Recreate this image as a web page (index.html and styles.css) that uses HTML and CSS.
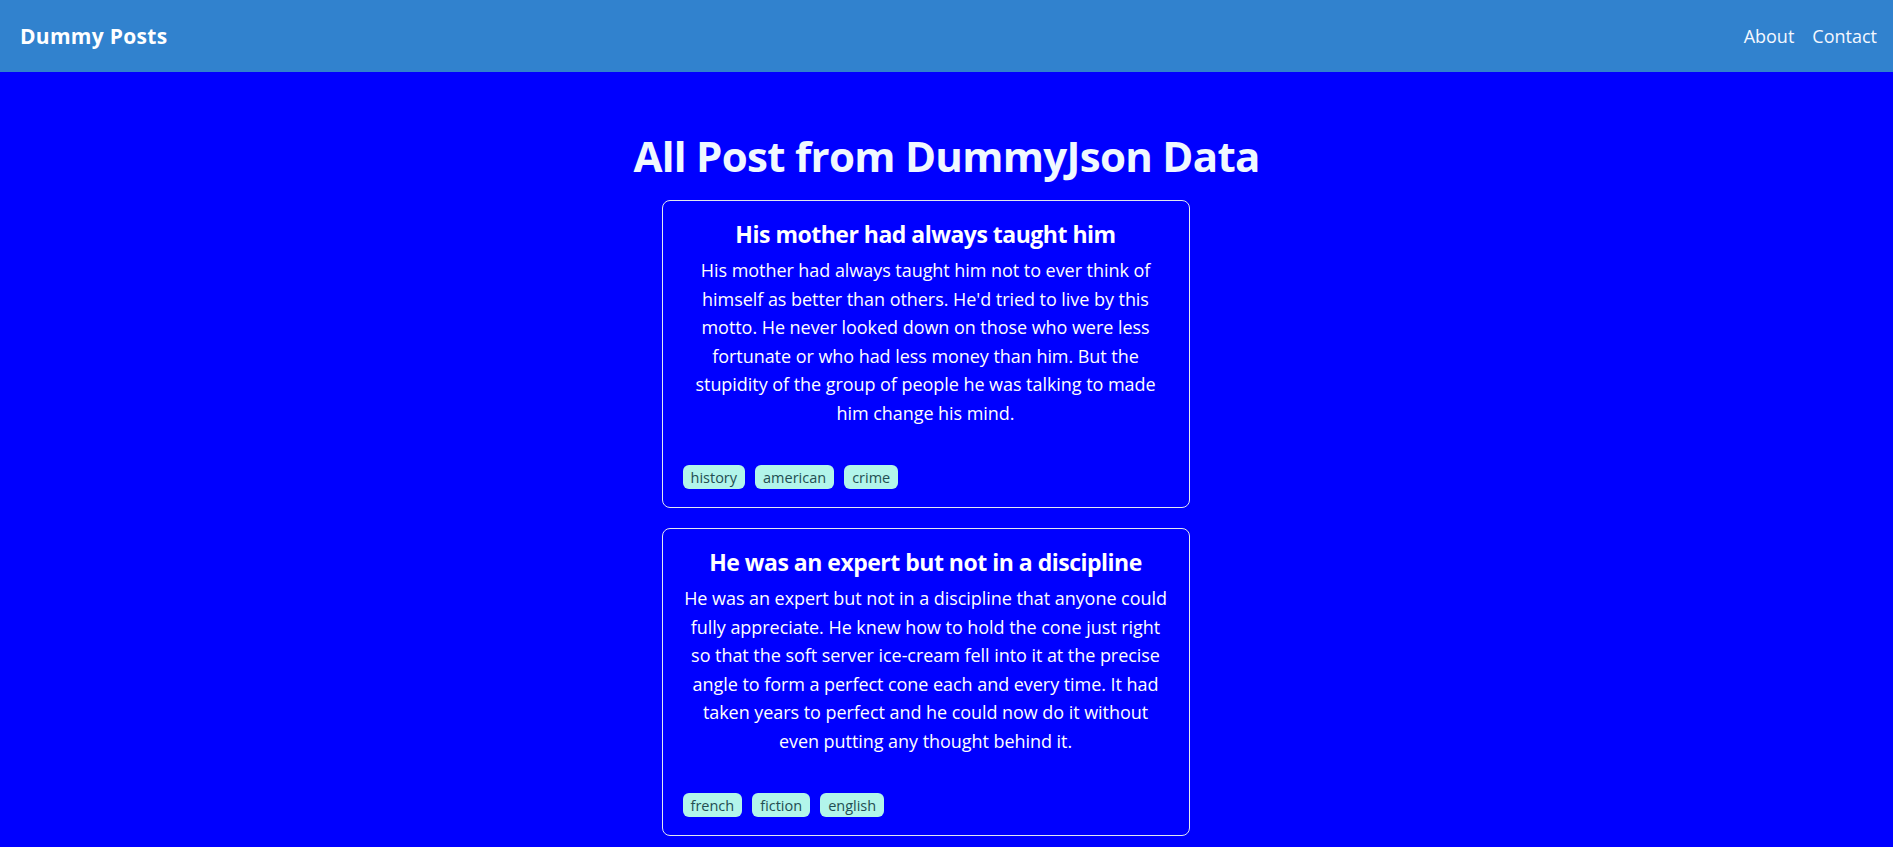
FILE: index.html
```html
<!DOCTYPE html>
<html lang="en">
<head>
<meta charset="utf-8">
<title>Dummy Posts</title>
<link rel="stylesheet" href="styles.css">
</head>
<body>
<header class="topbar">
  <div class="brand">Dummy Posts</div>
  <nav class="nav">
    <a class="nav-link" href="#">About</a>
    <a class="nav-link" href="#">Contact</a>
  </nav>
</header>
<main class="content">
  <h1 class="page-title">All Post from DummyJson Data</h1>
  <section class="post-list">
    <article class="post-card">
      <h2 class="post-title">His mother had always taught him</h2>
      <p class="post-body">His mother had always taught him not to ever think of himself as better than others. He'd tried to live by this motto. He never looked down on those who were less fortunate or who had less money than him. But the stupidity of the group of people he was talking to made him change his mind.</p>
      <div class="tags">
        <span class="tag">history</span>
        <span class="tag">american</span>
        <span class="tag">crime</span>
      </div>
    </article>
    <article class="post-card">
      <h2 class="post-title">He was an expert but not in a discipline</h2>
      <p class="post-body">He was an expert but not in a discipline that anyone could fully appreciate. He knew how to hold the cone just right so that the soft server ice-cream fell into it at the precise angle to form a perfect cone each and every time. It had taken years to perfect and he could now do it without even putting any thought behind it.</p>
      <div class="tags">
        <span class="tag">french</span>
        <span class="tag">fiction</span>
        <span class="tag">english</span>
      </div>
    </article>
  </section>
</main>
</body>
</html>
```

FILE: styles.css
```css
* { box-sizing: border-box; }

html, body {
  margin: 0;
  padding: 0;
}

body {
  background: #0000ff;
  color: #ffffff;
  font-family: "Open Sans", "Noto Sans", sans-serif;
}

.topbar {
  height: 72px;
  background: #3182ce;
  display: flex;
  align-items: center;
  justify-content: space-between;
  padding: 0 16px 0 20px;
}

.brand {
  font-size: 21px;
  font-weight: 700;
  letter-spacing: 0.3px;
  color: #ffffff;
}

.nav {
  display: flex;
  gap: 18px;
}

.nav-link {
  color: #f4f8ff;
  text-decoration: none;
  font-size: 18px;
  letter-spacing: 0;
}

.content {
  display: flex;
  flex-direction: column;
  align-items: center;
  padding-top: 59px;
}

.page-title {
  margin: 0 0 19px;
  font-size: 42px;
  line-height: 50px;
  font-weight: 700;
  letter-spacing: -0.7px;
  color: #f0f8ff;
}

.post-list {
  display: flex;
  flex-direction: column;
  gap: 20px;
  margin-right: 42px;
}

.post-card {
  width: 528px;
  border: 1px solid #e2e8f0;
  border-radius: 8px;
  padding: 20px 20px 18px;
  text-align: center;
}

.post-title {
  margin: 0;
  font-size: 23px;
  line-height: 26px;
  font-weight: 700;
  letter-spacing: -0.5px;
}

.post-body {
  margin: 9px 0 0;
  font-size: 18px;
  line-height: 28.5px;
  letter-spacing: -0.05px;
}

.tags {
  display: flex;
  gap: 10px;
  margin-top: 38px;
}

.tag {
  display: inline-flex;
  align-items: center;
  height: 24px;
  padding: 0 8px;
  border-radius: 6px;
  background: #b2f5ea;
  color: #234e52;
  font-size: 14.5px;
  font-weight: 500;
  letter-spacing: 0;
}
```
